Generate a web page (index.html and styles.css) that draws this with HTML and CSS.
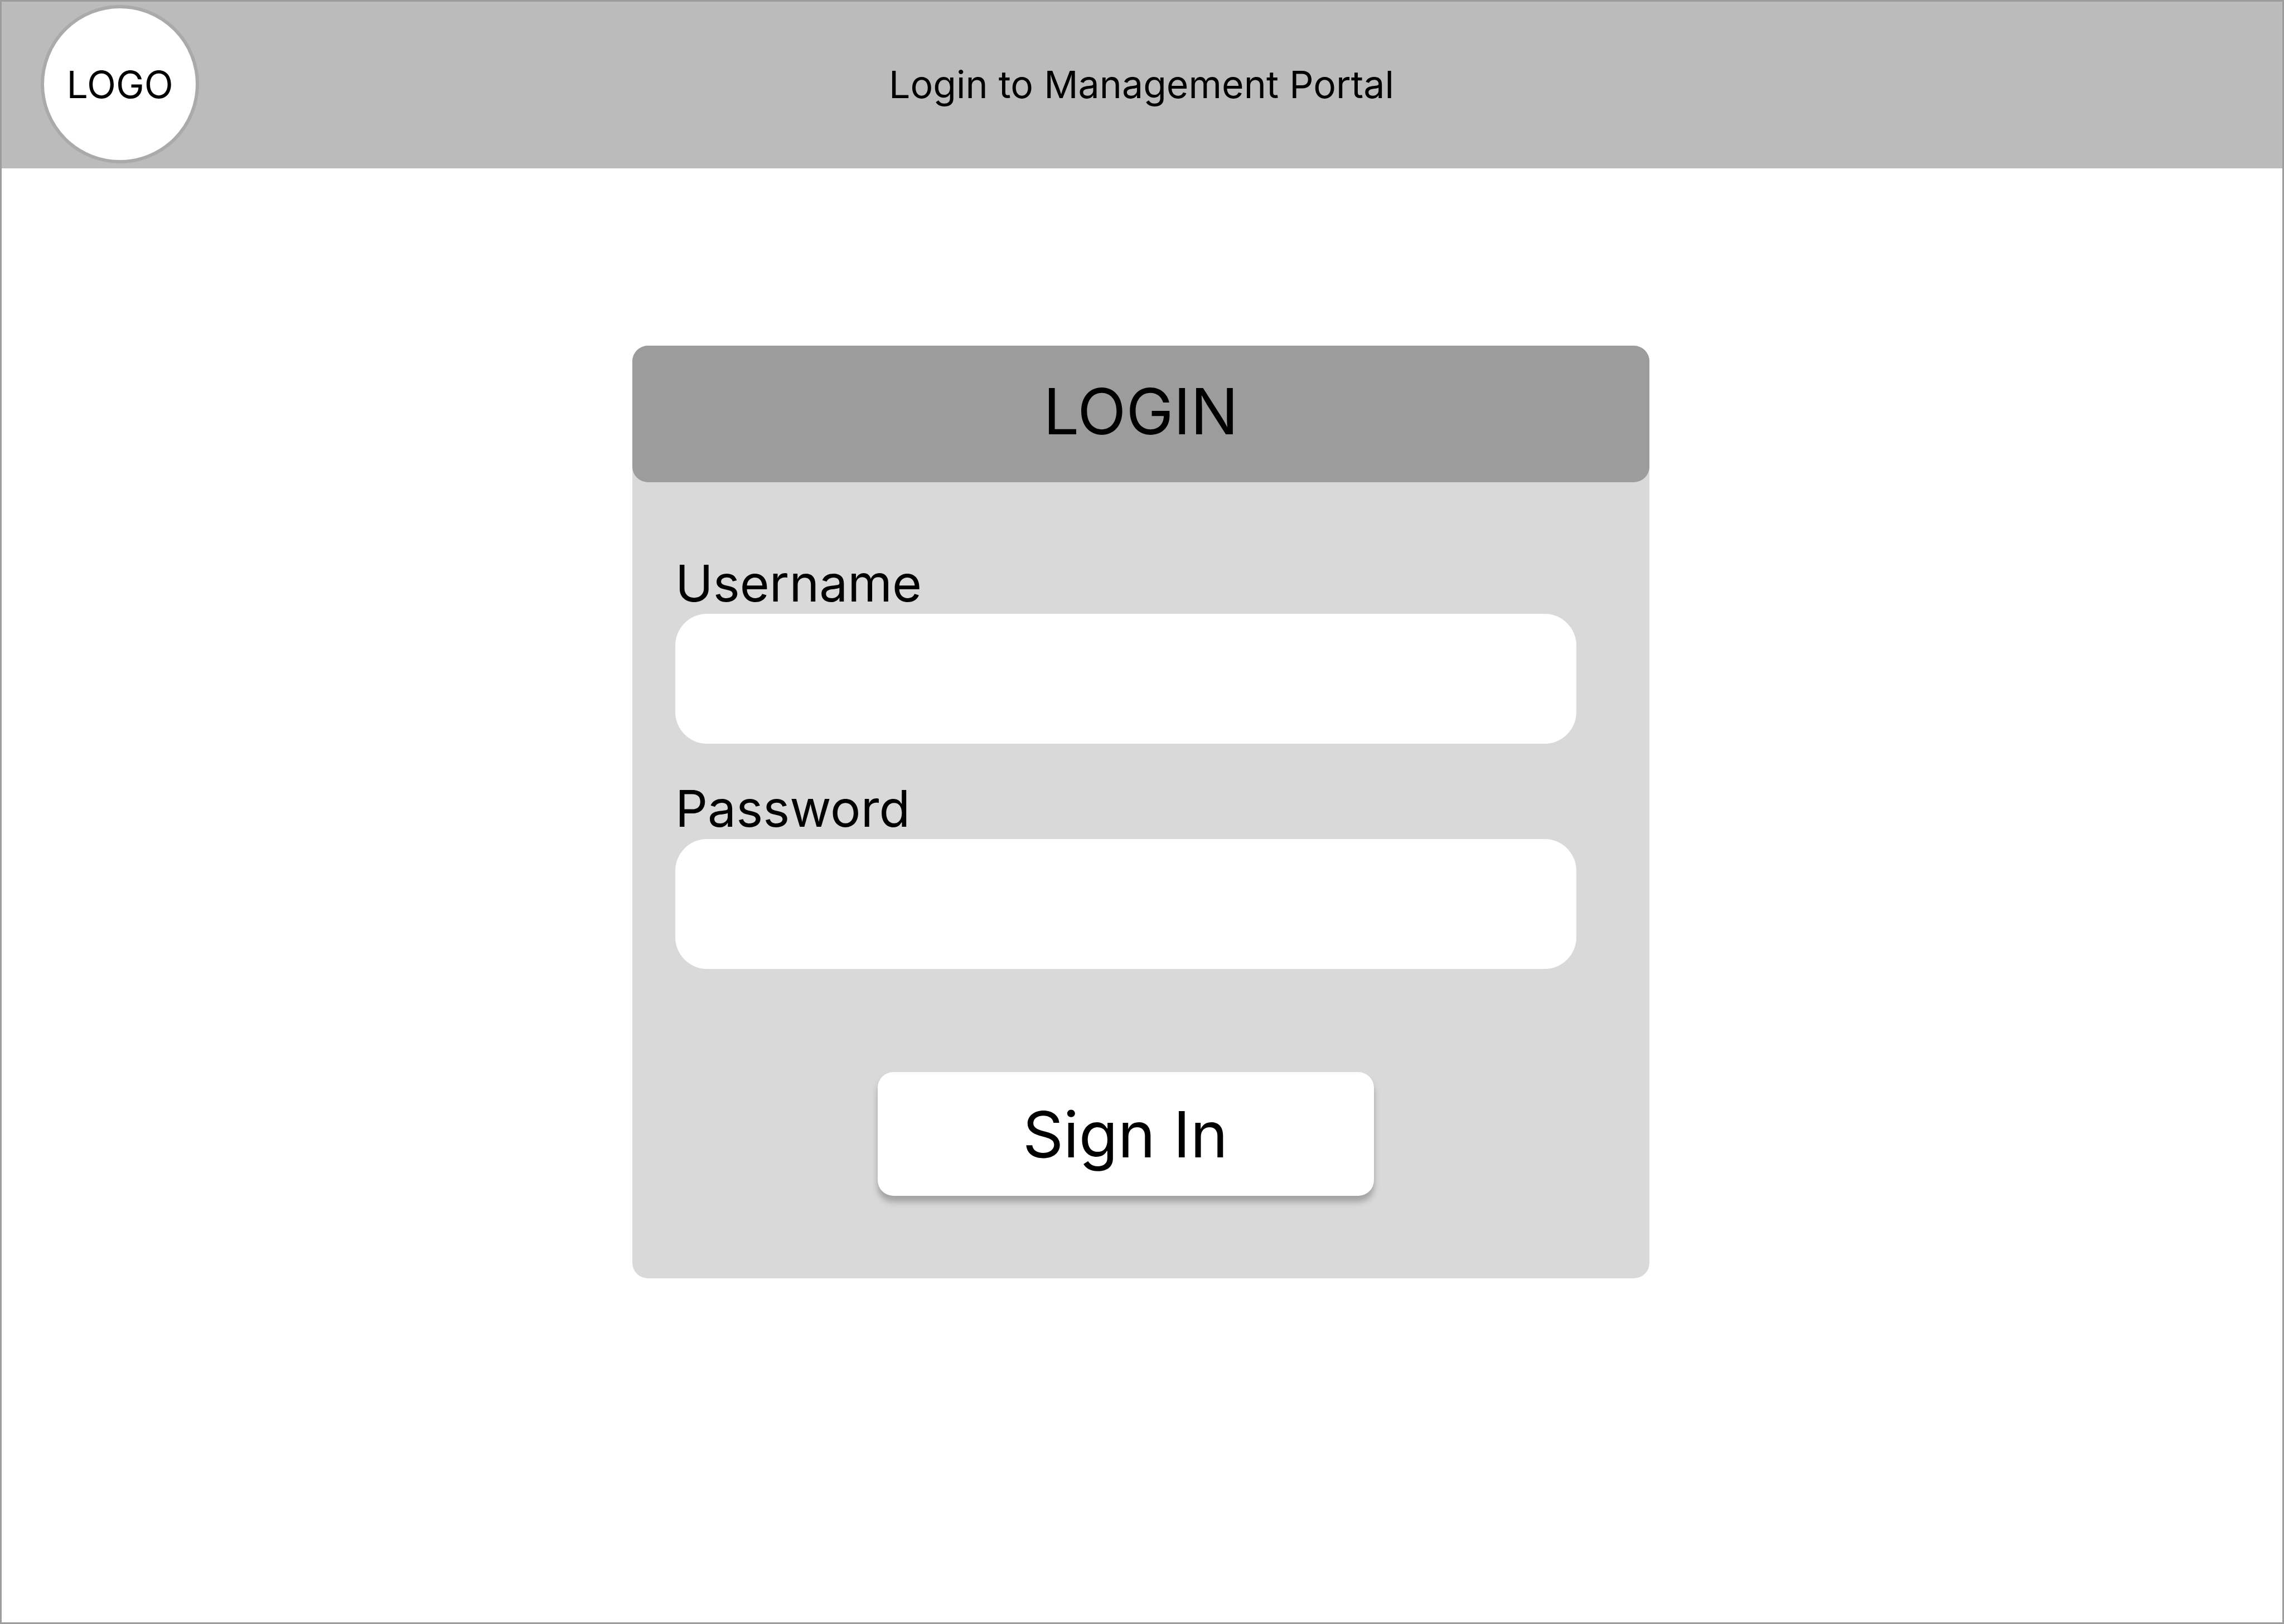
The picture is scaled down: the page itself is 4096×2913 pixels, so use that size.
FILE: index.html
```html
<!DOCTYPE html>
<html lang="en">
<head>
  <meta charset="utf-8">
  <meta name="viewport" content="width=device-width, initial-scale=1">
  <title>Login to Management Portal</title>
  <link rel="stylesheet" href="styles.css">
</head>
<body class="page">
  <header class="topbar">
    <div class="logo">LOGO</div>
    <h1 class="topbar-title">Login to Management Portal</h1>
  </header>
  <main class="content">
    <section class="card">
      <h2 class="card-title">LOGIN</h2>
      <form class="form">
        <div class="field">
          <label class="field-label" for="username">Username</label>
          <input class="field-input" id="username" name="username" type="text" autocomplete="username">
        </div>
        <div class="field">
          <label class="field-label" for="password">Password</label>
          <input class="field-input" id="password" name="password" type="password" autocomplete="current-password">
        </div>
        <button class="submit" type="submit">Sign In</button>
      </form>
    </section>
  </main>
</body>
</html>
```
FILE: styles.css
```css
*,
*::before,
*::after {
  box-sizing: border-box;
}

.page {
  display: flex;
  flex-direction: column;
  min-height: 100vh;
  margin: 0;
  border: 3px solid #9c9c9c;
  background: #fff;
  color: #000;
  font-family: Inter, "Liberation Sans", sans-serif;
  font-optical-sizing: none;
}

.topbar {
  display: grid;
  grid-template-columns: 1fr auto 1fr;
  align-items: center;
  padding: 6px 72px 9px 70px;
  background: #bbb;
}

.logo {
  display: flex;
  align-items: center;
  justify-content: center;
  width: 284px;
  height: 284px;
  border: 6px solid #aaa;
  border-radius: 50%;
  background: #fff;
  font-size: 68px;
  line-height: 82px;
}

.topbar-title {
  margin: 0;
  font-size: 68px;
  font-weight: 400;
  line-height: 82px;
}

.content {
  display: flex;
  justify-content: center;
  padding: 318px 74px 318px 70px;
}

.card {
  width: 100%;
  max-width: 1824px;
  border-radius: 28px;
  background: #d9d9d9;
}

.card-title {
  margin: 0;
  padding: 49px 28px 58px;
  border-radius: 28px;
  background: #9c9c9c;
  font-size: 114px;
  font-weight: 400;
  line-height: 138px;
  text-align: center;
}

.form {
  display: flex;
  flex-direction: column;
  gap: 61px;
  padding: 126px 131px 148px 77px;
}

.field {
  display: flex;
  flex-direction: column;
}

.field-label {
  font-size: 91px;
  line-height: 110px;
}

.field-input {
  width: 100%;
  height: 233px;
  padding: 0 57px;
  border: 0;
  border-radius: 57px;
  background: #fff;
  color: inherit;
  font: inherit;
  font-size: 91px;
}

.submit {
  align-self: center;
  width: 100%;
  max-width: 890px;
  margin-top: 124px;
  padding: 43px 30px 41px 28px;
  border: 0;
  border-radius: 28px;
  background: #fff;
  box-shadow: 0 11px 11px rgba(0, 0, 0, 0.25);
  color: inherit;
  font: inherit;
  font-size: 114px;
  line-height: 138px;
  cursor: pointer;
}
```
